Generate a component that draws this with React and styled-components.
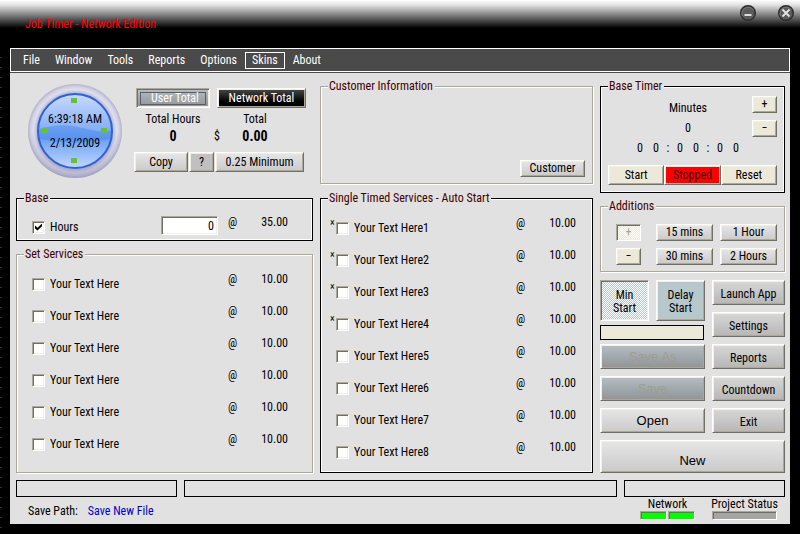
import React, { useState } from 'react';
import styled, { createGlobalStyle, css } from 'styled-components';

const GlobalStyle = createGlobalStyle`
  * {
    box-sizing: border-box;
  }
  body {
    margin: 0;
    background: #000;
    color: #000;
    font-family: 'Roboto Condensed', Lato, sans-serif;
    font-size: 12px;
    line-height: 14px;
  }
  button,
  input {
    font: inherit;
    color: inherit;
    margin: 0;
  }
`;

const raised = css`
  border: 1px solid;
  border-color: #fff #716f64 #716f64 #fff;
  box-shadow: inset 1px 1px #f1efe2, inset -1px -1px #aca899;
`;

const sunken = css`
  border: 1px solid;
  border-color: #aca899 #fff #fff #aca899;
  box-shadow: inset 1px 1px #716f64, inset -1px -1px #f1efe2;
`;

const tones = {
  silver: 'linear-gradient(#e6e6e6, #cacaca)',
  grey: 'linear-gradient(#d8d8d8, #b6b6b6)',
  flat: '#c0c0c0',
  cream: '#ece9d8',
  red: '#f00',
  blue: '#b7c8cd',
  steel: 'linear-gradient(#b4bec3, #909496)',
  black: 'linear-gradient(#4a4a4a, #000 70%)',
  dotsBlue: 'repeating-conic-gradient(#b7c8cd 0 25%, #fff 0 50%) 0 0 / 2px 2px',
  dotsCream: 'repeating-conic-gradient(#ece9d8 0 25%, #fff 0 50%) 0 0 / 2px 2px',
};

const Window = styled.div`
  min-height: 100vh;
  padding-bottom: 10px;
  background: repeating-linear-gradient(#000 0 7px, #333 7px 8px, #000 8px 10px) 0 50px / 2px 100% no-repeat #000;
`;

const TitleBar = styled.header`
  display: flex;
  justify-content: space-between;
  align-items: flex-start;
  height: 48px;
  padding: 5px 6px 0 25px;
  background: linear-gradient(#fff, #e2e2e2 5px, #000 28px);
`;

const Title = styled.h1`
  margin: 12px 0 0;
  font-size: 12px;
  font-weight: normal;
  color: #f00;
`;

const WindowButtons = styled.div`
  display: flex;
  gap: 22px;
`;

const RoundButton = styled.button`
  width: 16px;
  height: 16px;
  padding: 0;
  border: 0;
  background: none;

  svg {
    display: block;
  }
`;

const MenuBar = styled.nav`
  display: flex;
  align-items: center;
  gap: 1px;
  height: 24px;
  margin: 0 10px;
  padding: 0 5px;
  border: 1px solid #fff;
  background: #4a4a4a;
`;

const MenuItem = styled.button`
  height: 17px;
  padding: 0 6px;
  border: 1px solid ${(p) => (p.$active ? '#fff' : 'transparent')};
  background: none;
  color: #fff;
  line-height: 14px;
`;

const Body = styled.main`
  margin: 0 10px;
  padding: 6px 5px 4px 6px;
  border-top: 1px solid #4a4a4a;
  background: #e1e1e1;
`;

const Columns = styled.div`
  display: grid;
  grid-template-columns: 297fr 273fr 185fr;
  gap: 7px;
`;

const Column = styled.div`
  display: flex;
  flex-direction: column;
  gap: ${(p) => p.$gap || 6}px;
  min-width: 0;
`;

const Group = styled.fieldset`
  min-width: 0;
  margin: 0;
  padding: ${(p) => p.$pad || '8px'};
  flex: ${(p) => (p.$grow ? '1' : 'none')};
  border: 1px solid ${(p) => (p.$dark ? '#000' : '#aca899')};
  box-shadow: ${(p) => (p.$dark ? 'inset 0 0 0 1px #fff' : 'inset 1px 1px #fff, 1px 1px #fff')};

  legend {
    height: 14px;
    margin-left: ${(p) => p.$legend || 0}px;
    padding: 0 2px 0 1px;
    background: #e1e1e1;
    color: #400000;
  }
`;

const Button = styled.button`
  ${(p) => (p.$pressed ? sunken : raised)}
  width: ${(p) => (p.$width ? `${p.$width}px` : 'auto')};
  height: ${(p) => p.$height || 17}px;
  padding: ${(p) => p.$low || 0}px 0 0;
  background: ${(p) => tones[p.$tone || 'silver']};
  color: ${(p) => p.$color || '#000'};
  line-height: 13px;
  white-space: nowrap;
`;

const StartButton = styled(Button)`
  padding: 2px 8px 0;
  white-space: normal;
`;

const BigButton = styled(Button)`
  font-family: 'Liberation Sans', Arial, sans-serif;
  font-size: 13px;
`;

const Summary = styled.div`
  display: flex;
  gap: 12px;
  height: 106px;
  padding: 5px 0 0 12px;
`;

const ClockFace = styled.div`
  position: relative;
  flex: none;
  width: 94px;
  height: 94px;
  text-align: center;

  svg {
    display: block;
  }
`;

const ClockText = styled.div`
  position: absolute;
  inset: 23px 0 0;
  line-height: 24px;
`;

const Totals = styled.div`
  display: flex;
  flex-direction: column;
  padding-top: 4px;
`;

const TotalButtons = styled.div`
  display: flex;
  gap: 7px;
  padding-left: 2px;
`;

const FocusMark = styled.span`
  display: block;
  margin: 0 3px;
  border: 1px solid #5c5c66;
  line-height: 11px;
  padding-left: 4px;
`;

const TotalGrid = styled.div`
  display: grid;
  grid-template-columns: 78px 10px 66px;
  text-align: center;
  line-height: 17px;
  padding-top: 3px;
`;

const Amount = styled.strong`
  font-size: 14px;
`;

const ActionButtons = styled.div`
  display: flex;
  gap: 1px;
  margin-top: 7px;
`;

const ServiceRow = styled.div`
  display: grid;
  grid-template-columns: 1fr 67px 12px 48px;
  align-items: start;
  height: ${(p) => p.$height || 32}px;
  line-height: 18px;
`;

const ServiceLabel = styled.label`
  display: flex;
  align-items: center;
  gap: 5px;
  padding-top: 5px;
`;

const Star = styled.span`
  align-self: flex-start;
  width: 6px;
  margin-right: -5px;
  font-size: 10px;
  line-height: 8px;
`;

const Price = styled.span`
  text-align: right;
`;

const CheckBox = styled.input`
  ${sunken}
  appearance: none;
  flex: none;
  width: 13px;
  height: 13px;
  background: #fff;

  &:checked::after {
    content: '';
    display: block;
    width: 7px;
    height: 7px;
    margin: 2px;
    background: #000;
    clip-path: polygon(0 30%, 36% 62%, 100% 0, 100% 40%, 36% 100%, 0 70%);
  }
`;

const HoursInput = styled.input`
  ${sunken}
  width: 57px;
  height: 19px;
  margin-top: 3px;
  padding: 0 3px;
  border-radius: 0;
  background: #fff;
  text-align: right;
`;

const CustomerArea = styled.div`
  display: flex;
  justify-content: flex-end;
  align-items: flex-end;
  height: 84px;
`;

const TimerGrid = styled.div`
  display: grid;
  grid-template-columns: 1fr 25px;
  gap: 8px;
  padding-left: 24px;
`;

const TimerReadout = styled.div`
  padding-top: 2px;
  line-height: 20px;
  text-align: center;
`;

const Digits = styled.div`
  display: flex;
  justify-content: center;

  span {
    width: 16px;
  }
  span:nth-child(3n) {
    width: 8px;
  }
`;

const TimerButtons = styled.div`
  display: grid;
  grid-template-columns: repeat(3, 1fr);
  margin-top: 7px;
`;

const AdditionGrid = styled.div`
  display: grid;
  grid-template-columns: 33px 1fr 1fr;
  gap: 7px;
`;

const ActionGrid = styled.div`
  display: grid;
  grid-template-columns: 105fr 73fr;
  gap: 7px;
  margin-top: 2px;

  & > button {
    grid-column: 1 / -1;
  }
`;

const StartPair = styled.div`
  display: grid;
  grid-template-columns: 1fr 1fr;
  gap: 7px;
  margin-bottom: 4px;
`;

const DelayBar = styled.div`
  height: 15px;
  margin: 0 1px 4px 0;
  border: 1px solid #000;
  background: #ece9d8;
`;

const StatusBar = styled.div`
  display: grid;
  grid-template-columns: 161fr 433fr 161fr;
  gap: 7px;
  margin-top: 7px;

  div {
    height: 17px;
    border: 1px solid #000;
  }
`;

const Footer = styled.footer`
  display: flex;
  gap: 17px;
  padding-right: 8px;
`;

const SavePath = styled.div`
  flex: 1;
  display: flex;
  gap: 10px;
  padding: 7px 0 0 12px;

  a {
    color: #00c;
    text-decoration: none;
  }
`;

const Indicator = styled.div`
  width: ${(p) => p.$width}px;
  display: flex;
  flex-direction: column;
  align-items: center;
  white-space: nowrap;
`;

const Lights = styled.div`
  display: flex;
  gap: 1px;
  width: 100%;
`;

const Light = styled.span`
  flex: 1;
  height: 9px;
  border: 1px solid;
  border-color: #aca899 #fff #fff #aca899;
  box-shadow: inset 1px 1px #716f64;
  background: ${(p) => p.$color};
`;

const MENU = ['File', 'Window', 'Tools', 'Reports', 'Options', 'Skins', 'About'];
const SET_SERVICES = Array.from({ length: 6 }, () => 'Your Text Here');
const TIMED_SERVICES = Array.from({ length: 8 }, (_, i) => `Your Text Here${i + 1}`);

function WindowIcon({ children }) {
  return (
    <svg width="16" height="16" viewBox="0 0 16 16">
      <circle cx="8" cy="8" r="7.3" fill="#5a5a5a" stroke="#2c2c2c" strokeWidth="1.4" />
      <path d="M2.5 11A6.3 6.3 0 0 1 13.5 5" fill="none" stroke="#7c7c7c" />
      {children}
    </svg>
  );
}

function Clock() {
  return (
    <ClockFace>
      <svg width="94" height="94" viewBox="0 0 94 94">
        <defs>
          <radialGradient id="ring">
            <stop offset="0.8" stopColor="#b4b4d4" />
            <stop offset="0.88" stopColor="#dedeee" />
            <stop offset="0.94" stopColor="#d2d2e4" />
            <stop offset="1" stopColor="#b4b4c6" />
          </radialGradient>
          <linearGradient id="rim" x1="0" y1="0" x2="0" y2="1">
            <stop offset="0.5" stopColor="#8080ac" stopOpacity="0" />
            <stop offset="1" stopColor="#8080ac" stopOpacity="0.4" />
          </linearGradient>
          <linearGradient id="face" x1="0" y1="0" x2="0" y2="1">
            <stop offset="0" stopColor="#c8daff" />
            <stop offset="0.45" stopColor="#8ab2f6" />
            <stop offset="0.6" stopColor="#6aa0f3" />
            <stop offset="1" stopColor="#c0d8ff" />
          </linearGradient>
        </defs>
        <circle cx="47" cy="47" r="47" fill="url(#ring)" />
        <circle cx="47" cy="47" r="47" fill="url(#rim)" />
        <circle cx="47" cy="47" r="37" fill="url(#face)" stroke="#2f62cf" strokeWidth="2" />
        <path d="M11 45Q34 38 55 44T83 46A36 36 0 0 1 82 55Q47 62 12 55Z" fill="#3f80e8" opacity="0.4" />
        <g fill="#66c32c">
          <rect x="43" y="14" width="6" height="5" />
          <rect x="14" y="44" width="6" height="5" />
          <rect x="73" y="44" width="6" height="5" />
          <rect x="43" y="74" width="6" height="5" />
        </g>
      </svg>
      <ClockText>
        <div>6:39:18 AM</div>
        <div>2/13/2009</div>
      </ClockText>
    </ClockFace>
  );
}

function Service({ name, star, starColumn }) {
  return (
    <ServiceRow>
      <ServiceLabel>
        {starColumn && <Star>{star ? '×' : ''}</Star>}
        <CheckBox type="checkbox" />
        {name}
      </ServiceLabel>
      <span />
      <span>@</span>
      <Price>10.00</Price>
    </ServiceRow>
  );
}

export default function App() {
  const [hours, setHours] = useState('0');

  return (
    <Window>
      <GlobalStyle />
      <TitleBar>
        <Title>Job Timer - Network Edition</Title>
        <WindowButtons>
          <RoundButton aria-label="Minimize">
            <WindowIcon>
              <path d="M4.5 10h7" stroke="#ddd" strokeWidth="2" />
            </WindowIcon>
          </RoundButton>
          <RoundButton aria-label="Close">
            <WindowIcon>
              <path d="M4.5 4.5l7 7M11.5 4.5l-7 7" stroke="#e4e4e4" strokeWidth="1.8" />
            </WindowIcon>
          </RoundButton>
        </WindowButtons>
      </TitleBar>
      <MenuBar>
        {MENU.map((item) => (
          <MenuItem key={item} $active={item === 'Skins'}>
            {item}
          </MenuItem>
        ))}
      </MenuBar>
      <Body>
        <Columns>
          <Column>
            <Summary>
              <Clock />
              <Totals>
                <TotalButtons>
                  <Button $width={74} $height={20} $tone="steel" $pressed $color="#fff">
                    <FocusMark>User Total</FocusMark>
                  </Button>
                  <Button $width={89} $height={20} $tone="black" $color="#fff">
                    Network Total
                  </Button>
                </TotalButtons>
                <TotalGrid>
                  <span>Total Hours</span>
                  <span />
                  <span>Total</span>
                  <Amount>0</Amount>
                  <span>$</span>
                  <Amount>0.00</Amount>
                </TotalGrid>
                <ActionButtons>
                  <Button $width={54} $height={20}>Copy</Button>
                  <Button $width={25} $height={20} $tone="flat">?</Button>
                  <Button $width={89} $height={20}>0.25 Minimum</Button>
                </ActionButtons>
              </Totals>
            </Summary>
            <Group $dark $pad="8px 24px 0 15px" $legend={-8}>
              <legend>Base</legend>
              <ServiceRow $height={27}>
                <ServiceLabel>
                  <CheckBox type="checkbox" defaultChecked />
                  Hours
                </ServiceLabel>
                <HoursInput aria-label="Hours" value={hours} onChange={(e) => setHours(e.target.value)} />
                <span>@</span>
                <Price>35.00</Price>
              </ServiceRow>
            </Group>
            <Group $grow $pad="9px 24px 0 15px" $legend={-8}>
              <legend>Set Services</legend>
              {SET_SERVICES.map((name, i) => (
                <Service key={i} name={name} />
              ))}
            </Group>
          </Column>

          <Column $gap={7}>
            <Group $pad="0 7px 6px">
              <legend>Customer Information</legend>
              <CustomerArea>
                <Button $width={65}>Customer</Button>
              </CustomerArea>
            </Group>
            <Group $dark $grow $pad="9px 16px 2px 9px" $legend={-2}>
              <legend>Single Timed Services - Auto Start</legend>
              {TIMED_SERVICES.map((name, i) => (
                <Service key={name} name={name} starColumn star={i < 4} />
              ))}
            </Group>
          </Column>

          <Column>
            <Group $dark $pad="3px 7px 7px">
              <legend>Base Timer</legend>
              <TimerGrid>
                <TimerReadout>
                  <div>Minutes</div>
                  <div>0</div>
                  <Digits>
                    {'00:00:00'.split('').map((char, i) => (
                      <span key={i}>{char}</span>
                    ))}
                  </Digits>
                </TimerReadout>
                <Column $gap={7}>
                  <Button $tone="cream">+</Button>
                  <Button $tone="cream">−</Button>
                </Column>
              </TimerGrid>
              <TimerButtons>
                <Button $tone="cream" $height={20}>Start</Button>
                <Button $tone="red" $height={20} $color="#400000">Stopped</Button>
                <Button $tone="cream" $height={20}>Reset</Button>
              </TimerButtons>
            </Group>
            <Group $pad="11px 7px 6px 15px" $legend={-8}>
              <legend>Additions</legend>
              <AdditionGrid>
                <Button $tone="dotsCream" $width={25} $pressed $color="#aca899">+</Button>
                <Button>15 mins</Button>
                <Button>1 Hour</Button>
                <Button $tone="cream" $width={25}>−</Button>
                <Button>30 mins</Button>
                <Button>2 Hours</Button>
              </AdditionGrid>
            </Group>
            <ActionGrid>
              <div>
                <StartPair>
                  <StartButton $height={41} $tone="dotsBlue" $pressed>Min Start</StartButton>
                  <StartButton $height={41} $tone="blue">Delay Start</StartButton>
                </StartPair>
                <DelayBar />
                <Column $gap={7}>
                  <BigButton $height={25} $tone="steel" $color="#9d9c93">Save As</BigButton>
                  <BigButton $height={25} $tone="steel" $color="#9d9c93">Save</BigButton>
                  <BigButton $height={25}>Open</BigButton>
                </Column>
              </div>
              <Column $gap={7}>
                {['Launch App', 'Settings', 'Reports', 'Countdown', 'Exit'].map((name) => (
                  <Button key={name} $height={25} $tone="grey" $low={4}>
                    {name}
                  </Button>
                ))}
              </Column>
              <BigButton $height={33} $low={8}>New</BigButton>
            </ActionGrid>
          </Column>
        </Columns>
        <StatusBar>
          <div />
          <div />
          <div />
        </StatusBar>
        <Footer>
          <SavePath>
            <span>Save Path:</span>
            <a href="#save">Save New File</a>
          </SavePath>
          <Indicator $width={55}>
            Network
            <Lights>
              <Light $color="#0f0" />
              <Light $color="#0f0" />
            </Lights>
          </Indicator>
          <Indicator $width={65}>
            Project Status
            <Lights>
              <Light $color="#a5a5a5" />
            </Lights>
          </Indicator>
        </Footer>
      </Body>
    </Window>
  );
}
